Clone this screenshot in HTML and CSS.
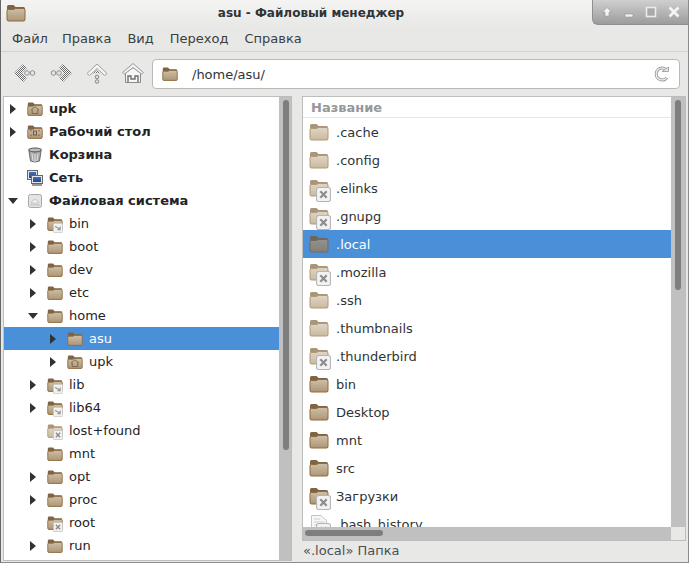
FILE: index.html
```html
<!DOCTYPE html>
<html lang="ru">

<head>
    <meta charset="UTF-8" />
    <title>asu - Файловый менеджер</title>
    <link rel="stylesheet" href="styles.css">
</head>

<body>
    <svg class="defs" width="0" height="0">
        <defs>
            <linearGradient id="bodyDark" x1="0" y1="0" x2="0" y2="1">
                <stop offset="0" stop-color="#cdbfa8" />
                <stop offset="1" stop-color="#ad9677" />
            </linearGradient>
            <linearGradient id="bodyLight" x1="0" y1="0" x2="0" y2="1">
                <stop offset="0" stop-color="#e0d6c6" />
                <stop offset="1" stop-color="#c9b9a0" />
            </linearGradient>
            <linearGradient id="screen" x1="0" y1="0" x2="0" y2="1">
                <stop offset="0" stop-color="#3f74b8" />
                <stop offset="1" stop-color="#1f4a8c" />
            </linearGradient>
            <pattern id="hatch" width="2" height="2" patternUnits="userSpaceOnUse">
                <rect width="2" height="2" fill="#f6f6f6" />
                <rect width="1" height="1" fill="#6f6f6f" />
                <rect x="1" y="1" width="1" height="1" fill="#6f6f6f" />
            </pattern>
            <symbol id="folder" viewBox="0 0 20 18">
                <path d="M1 16V2.500Q1 1 2.500 1H7.500L9.500 3H17.500Q19 3 19 4.500V16Q19 17 18 17H2Q1 17 1 16Z" fill="#7d6444" />
                <path d="M1 6.500Q1 5.500 2.500 5.500H7.500L9.500 4.500H17.500Q19 4.500 19 6V15.500Q19 17 17.500 17H2.500Q1 17 1 15.500Z" fill="url(#bodyDark)" stroke="#8f6a38" />
            </symbol>
            <symbol id="folderLight" viewBox="0 0 20 18">
                <path d="M1 16V2.500Q1 1 2.500 1H7.500L9.500 3H17.500Q19 3 19 4.500V16Q19 17 18 17H2Q1 17 1 16Z" fill="#a8957a" />
                <path d="M1 6.500Q1 5.500 2.500 5.500H7.500L9.500 4.500H17.500Q19 4.500 19 6V15.500Q19 17 17.500 17H2.500Q1 17 1 15.500Z" fill="url(#bodyLight)" stroke="#b09a78" />
            </symbol>
            <symbol id="badgeX" viewBox="0 0 14 14">
                <rect x="0.500" y="0.500" width="13" height="13" rx="2" fill="#f2f2f2" stroke="#b5b5b5" />
                <path d="M4 4L10 10M10 4L4 10" stroke="#8c8c8c" stroke-width="2" />
            </symbol>
            <symbol id="badgeLink" viewBox="0 0 14 14">
                <rect x="0.500" y="0.500" width="13" height="13" rx="2" fill="#f2f2f2" stroke="#c0c0c0" />
                <path d="M3 5L9 8M10 5V9.500H6" stroke="#8c8c8c" stroke-width="1.500" fill="none" />
            </symbol>
        </defs>
    </svg>

    <div class="window">
        <div class="titlebar">
            <svg class="app-icon"><use href="#folder" /></svg>
            <div class="title">asu - Файловый менеджер</div>
            <div class="wm-buttons">
                <svg width="12" height="12" viewBox="0 0 12 12"><path d="M6 1.500L10.500 6H8V10H4V6H1.500Z" fill="#f4f4f4" stroke="#8a8a8a" stroke-width="0.500" /></svg>
                <svg width="12" height="12" viewBox="0 0 12 12"><rect x="2" y="8" width="8" height="3" fill="#f0f0f0" stroke="#8a8a8a" stroke-width="0.500" /></svg>
                <svg width="12" height="12" viewBox="0 0 12 12"><rect x="1.500" y="1.500" width="9" height="9" fill="#a9a9a9" stroke="#ececec" stroke-width="1.600" /></svg>
                <svg width="14" height="14" viewBox="0 0 14 14"><path d="M2.500 2.500L11.500 11.500M11.500 2.500L2.500 11.500" stroke="#f4f4f4" stroke-width="2.600" /></svg>
            </div>
        </div>

        <div class="menubar">
            <span class="first">Файл</span>
            <span>Правка</span>
            <span>Вид</span>
            <span>Переход</span>
            <span>Справка</span>
        </div>

        <div class="toolbar">
            <div class="tool-buttons">
                <svg width="22" height="22" viewBox="0 0 22 22"><path d="M11 4L4 11L11 18" fill="none" stroke="#e4e4e4" stroke-width="7" /><path d="M11 4L4 11L11 18" fill="none" stroke="url(#hatch)" stroke-width="5.500" /><circle cx="13" cy="11" r="2.300" fill="#e6e6e6" stroke="#8f8f8f" /><circle cx="18.500" cy="11" r="2.300" fill="#e6e6e6" stroke="#8f8f8f" /></svg>
                <svg width="22" height="22" viewBox="0 0 22 22"><path d="M11 4L18 11L11 18" fill="none" stroke="#e4e4e4" stroke-width="7" /><path d="M11 4L18 11L11 18" fill="none" stroke="url(#hatch)" stroke-width="5.500" /><circle cx="9" cy="11" r="2.300" fill="#e6e6e6" stroke="#8f8f8f" /><circle cx="3.500" cy="11" r="2.300" fill="#e6e6e6" stroke="#8f8f8f" /></svg>
                <svg width="22" height="22" viewBox="0 0 22 22"><path d="M11 2L21 11.500L18.500 13.500L11 6.500L3.500 13.500L1 11.500Z" fill="#f4f4f4" stroke="#a0a0a0" /><path d="M11 8L15 11.500L11 11L7 11.500Z" fill="url(#hatch)" /><circle cx="11" cy="15" r="1.800" fill="#ddd" stroke="#8a8a8a" /><circle cx="11" cy="19.500" r="1.800" fill="#ddd" stroke="#8a8a8a" /></svg>
                <svg width="22" height="22" viewBox="0 0 22 22"><path d="M3.500 11V20.500H18.500V11L11 5.500Z" fill="#f6f6f6" stroke="#8a8a8a" /><path d="M11 1.500L21.500 10.500L19.500 12L11 5.500L2.500 12L0.500 10.500Z" fill="#f2f2f2" stroke="#9a9a9a" /><path d="M6 20V14H9V17H13V14H16V20" fill="none" stroke="#6f6f6f" stroke-width="1.400" /></svg>
            </div>
            <div class="address">
                <svg class="icon-small"><use href="#folder" /></svg>
                <span class="path">/home/asu/</span>
                <svg class="reload" width="16" height="16" viewBox="0 0 16 16"><path d="M13 4.500A6 6 0 1 0 13 11.500" fill="none" stroke="#9c9c9c" stroke-width="3" /><path d="M13 4.500A6 6 0 1 0 13 11.500" fill="none" stroke="#f2f2f2" stroke-width="1.200" /><path d="M8 5.500H14.500V1Z" fill="#e8e8e8" stroke="#969696" stroke-width="0.800" /></svg>
            </div>
        </div>

        <div class="panes">
            <div class="side-pane">
                <div class="tree">
                    <div class="tree-row top"><i class="arrow"></i>
                        <span class="icon-wrap"><svg class="icon-small"><use href="#folder" /></svg><svg class="overlay-home" viewBox="0 0 12 10"><path d="M1 5L6 1L11 5M2.500 4.500V9.500H9.500V4.500" fill="none" stroke="#6f5a3e" /></svg></span>
                        <span>upk</span>
                    </div>
                    <div class="tree-row top"><i class="arrow"></i>
                        <span class="icon-wrap"><svg class="icon-small"><use href="#folder" /></svg><svg class="overlay-home" viewBox="0 0 12 10"><rect x="4" y="2.500" width="4" height="5" fill="none" stroke="#5f4c34" /><path d="M1 1V3M11 1V3M1 7V9M11 7V9" stroke="#5f4c34" /></svg></span>
                        <span>Рабочий стол</span>
                    </div>
                    <div class="tree-row top"><i class="arrow none"></i>
                        <span class="icon-wrap"><svg class="icon-small" viewBox="0 0 16 16"><ellipse cx="8" cy="3" rx="6.500" ry="2" fill="#bdbdbd" stroke="#555" /><path d="M2 4L3.500 14Q8 16 12.500 14L14 4Q8 6.500 2 4Z" fill="#a9a9a9" stroke="#6b6b6b" /><path d="M5 6.500L6 14M8 7V15M11 6.500L10 14" stroke="#e2e2e2" /></svg></span>
                        <span>Корзина</span>
                    </div>
                    <div class="tree-row top"><i class="arrow none"></i>
                        <span class="icon-wrap"><svg class="icon-small" viewBox="0 0 16 16"><rect x="0.500" y="0.500" width="10" height="9" fill="#e6e6e6" stroke="#666" /><rect x="2" y="2" width="7" height="6" fill="url(#screen)" /><rect x="4.500" y="5.500" width="11" height="8" fill="#e6e6e6" stroke="#666" /><rect x="6" y="7" width="8" height="5" fill="url(#screen)" /><path d="M5 15H15" stroke="#777" stroke-width="1.500" /></svg></span>
                        <span>Сеть</span>
                    </div>
                    <div class="tree-row top"><i class="arrow open"></i>
                        <span class="icon-wrap"><svg class="icon-small" viewBox="0 0 16 16"><rect x="1.500" y="1.500" width="13" height="13" rx="2" fill="#e4e4e4" stroke="#a8a8a8" /><path d="M4 10Q8 3 12 10Z" fill="#f6f6f6" stroke="#c2c2c2" /><path d="M3 12H13" stroke="#bcbcbc" /></svg></span>
                        <span>Файловая система</span>
                    </div>
                    <div class="tree-row lvl1"><i class="arrow"></i>
                        <span class="icon-wrap"><svg class="icon-small"><use href="#folder" /></svg><svg class="badge-small"><use href="#badgeLink" /></svg></span>
                        <span>bin</span>
                    </div>
                    <div class="tree-row lvl1"><i class="arrow"></i>
                        <span class="icon-wrap"><svg class="icon-small"><use href="#folder" /></svg></span>
                        <span>boot</span>
                    </div>
                    <div class="tree-row lvl1"><i class="arrow"></i>
                        <span class="icon-wrap"><svg class="icon-small"><use href="#folder" /></svg></span>
                        <span>dev</span>
                    </div>
                    <div class="tree-row lvl1"><i class="arrow"></i>
                        <span class="icon-wrap"><svg class="icon-small"><use href="#folder" /></svg></span>
                        <span>etc</span>
                    </div>
                    <div class="tree-row lvl1"><i class="arrow open"></i>
                        <span class="icon-wrap"><svg class="icon-small"><use href="#folder" /></svg></span>
                        <span>home</span>
                    </div>
                    <div class="tree-row lvl2 selected"><i class="arrow"></i>
                        <span class="icon-wrap"><svg class="icon-small"><use href="#folder" /></svg></span>
                        <span>asu</span>
                    </div>
                    <div class="tree-row lvl2"><i class="arrow"></i>
                        <span class="icon-wrap"><svg class="icon-small"><use href="#folder" /></svg><svg class="overlay-home" viewBox="0 0 12 10"><path d="M1 5L6 1L11 5M2.500 4.500V9.500H9.500V4.500" fill="none" stroke="#6f5a3e" /></svg></span>
                        <span>upk</span>
                    </div>
                    <div class="tree-row lvl1"><i class="arrow"></i>
                        <span class="icon-wrap"><svg class="icon-small"><use href="#folder" /></svg><svg class="badge-small"><use href="#badgeLink" /></svg></span>
                        <span>lib</span>
                    </div>
                    <div class="tree-row lvl1"><i class="arrow"></i>
                        <span class="icon-wrap"><svg class="icon-small"><use href="#folder" /></svg><svg class="badge-small"><use href="#badgeLink" /></svg></span>
                        <span>lib64</span>
                    </div>
                    <div class="tree-row lvl1"><i class="arrow none"></i>
                        <span class="icon-wrap"><svg class="icon-small"><use href="#folderLight" /></svg><svg class="badge-small"><use href="#badgeX" /></svg></span>
                        <span>lost+found</span>
                    </div>
                    <div class="tree-row lvl1"><i class="arrow none"></i>
                        <span class="icon-wrap"><svg class="icon-small"><use href="#folder" /></svg></span>
                        <span>mnt</span>
                    </div>
                    <div class="tree-row lvl1"><i class="arrow"></i>
                        <span class="icon-wrap"><svg class="icon-small"><use href="#folder" /></svg></span>
                        <span>opt</span>
                    </div>
                    <div class="tree-row lvl1"><i class="arrow"></i>
                        <span class="icon-wrap"><svg class="icon-small"><use href="#folder" /></svg></span>
                        <span>proc</span>
                    </div>
                    <div class="tree-row lvl1"><i class="arrow none"></i>
                        <span class="icon-wrap"><svg class="icon-small"><use href="#folder" /></svg><svg class="badge-small"><use href="#badgeX" /></svg></span>
                        <span>root</span>
                    </div>
                    <div class="tree-row lvl1"><i class="arrow"></i>
                        <span class="icon-wrap"><svg class="icon-small"><use href="#folder" /></svg></span>
                        <span>run</span>
                    </div>
                </div>
                <div class="vscroll side"><div class="thumb"></div></div>
            </div>

            <div class="main-pane">
                <div class="list-area">
                    <div class="list">
                        <div class="list-header">Название</div>
                        <div class="list-row"><span class="icon-wrap big"><svg class="icon-big"><use href="#folderLight" /></svg></span>.cache</div>
                        <div class="list-row"><span class="icon-wrap big"><svg class="icon-big"><use href="#folderLight" /></svg></span>.config</div>
                        <div class="list-row"><span class="icon-wrap big"><svg class="icon-big"><use href="#folderLight" /></svg><svg class="badge-big"><use href="#badgeX" /></svg></span>.elinks</div>
                        <div class="list-row"><span class="icon-wrap big"><svg class="icon-big"><use href="#folderLight" /></svg><svg class="badge-big"><use href="#badgeX" /></svg></span>.gnupg</div>
                        <div class="list-row selected"><span class="icon-wrap big"><svg class="icon-big"><use href="#folderLight" /></svg></span>.local</div>
                        <div class="list-row"><span class="icon-wrap big"><svg class="icon-big"><use href="#folderLight" /></svg><svg class="badge-big"><use href="#badgeX" /></svg></span>.mozilla</div>
                        <div class="list-row"><span class="icon-wrap big"><svg class="icon-big"><use href="#folderLight" /></svg></span>.ssh</div>
                        <div class="list-row"><span class="icon-wrap big"><svg class="icon-big"><use href="#folderLight" /></svg></span>.thumbnails</div>
                        <div class="list-row"><span class="icon-wrap big"><svg class="icon-big"><use href="#folderLight" /></svg><svg class="badge-big"><use href="#badgeX" /></svg></span>.thunderbird</div>
                        <div class="list-row"><span class="icon-wrap big"><svg class="icon-big"><use href="#folder" /></svg></span>bin</div>
                        <div class="list-row"><span class="icon-wrap big"><svg class="icon-big"><use href="#folder" /></svg></span>Desktop</div>
                        <div class="list-row"><span class="icon-wrap big"><svg class="icon-big"><use href="#folder" /></svg></span>mnt</div>
                        <div class="list-row"><span class="icon-wrap big"><svg class="icon-big"><use href="#folder" /></svg></span>src</div>
                        <div class="list-row"><span class="icon-wrap big"><svg class="icon-big"><use href="#folder" /></svg><svg class="badge-big"><use href="#badgeX" /></svg></span>Загрузки</div>
                        <div class="list-row"><span class="icon-wrap big"><svg class="icon-big" viewBox="0 0 20 18"><path d="M2.500 0.500H12L17.500 5.500V18H2.500Z" fill="#f6f6f6" stroke="#c4c4c4" /><path d="M5 4H11M5 7H15M5 10H15M5 13H15" stroke="#d0d0d0" /></svg><svg class="badge-big"><use href="#badgeX" /></svg></span>.bash_history</div>
                    </div>
                    <div class="vscroll main"><div class="thumb"></div></div>
                </div>
                <div class="hscroll-row">
                    <div class="hscroll"><div class="hthumb"></div></div>
                    <div class="corner"></div>
                </div>
                <div class="status">«.local» Папка</div>
            </div>
        </div>
    </div>
</body>

</html>
```

FILE: styles.css
```css
html,
body {
    margin: 0;
    height: 100%;
    background: #fff;
    overflow: hidden;
}

body {
    font-family: "DejaVu Sans", sans-serif;
    font-size: 13px;
    color: #2e3436;
}

.defs {
    position: absolute;
}

.window {
    width: 689px;
    height: 563px;
    box-sizing: border-box;
    display: flex;
    flex-direction: column;
    background: #e8e8e7;
    border-left: 1px solid #666;
    border-right: 1px solid #8c8c8c;
    border-bottom: 1px solid #8c8c8c;
}

/* title bar */
.titlebar {
    height: 27px;
    flex: none;
    display: flex;
    align-items: flex-start;
    background: linear-gradient(#f4f4f3, #e8e8e7);
}

.app-icon {
    width: 20px;
    height: 18px;
    margin: 4px 0 0 5px;
    flex: none;
}

.title {
    flex: 1;
    text-align: center;
    font-size: 12px;
    font-weight: 700;
    line-height: 27px;
    padding-left: 4px;
    white-space: nowrap;
}

.wm-buttons {
    width: 96px;
    height: 25px;
    flex: none;
    box-sizing: border-box;
    padding-left: 8px;
    display: flex;
    align-items: center;
    gap: 10px;
    background: linear-gradient(#cfcfcf, #9c9c9c);
    border-bottom-left-radius: 6px;
    border-left: 1px solid #8f8f8f;
    border-bottom: 1px solid #8f8f8f;
}

/* menu */
.menubar {
    height: 23px;
    flex: none;
    display: flex;
    gap: 16px;
    align-items: center;
    padding: 0 0 1px 11px;
    border-bottom: 1px solid #d2d2d1;
    color: #3a3f41;
}

.menubar .first {
    margin-right: -2px;
}

/* toolbar */
.toolbar {
    height: 41px;
    flex: none;
    box-sizing: border-box;
    display: flex;
    align-items: center;
    padding: 3px 8px 0 13px;
}

.tool-buttons {
    width: 130px;
    margin: -2px 8px 0 0;
    display: flex;
    justify-content: space-between;
    flex: none;
}

.address {
    flex: 1;
    height: 30px;
    box-sizing: border-box;
    background: #fff;
    border: 1px solid #b9b9b9;
    border-radius: 4px;
    display: flex;
    align-items: center;
    padding: 0 9px;
    gap: 14px;
}

.path {
    flex: 1;
}

.reload {
    flex: none;
}

.icon-small {
    width: 16px;
    height: 16px;
    display: block;
    flex: none;
}

/* panes */
.panes {
    flex: 1;
    min-height: 0;
    display: flex;
    gap: 10px;
    padding: 3px 2px 1px 2px;
}

.side-pane {
    width: 289px;
    flex: none;
    display: flex;
    box-sizing: border-box;
    border: 1px solid #bdbdbc;
    min-height: 0;
}

.tree {
    flex: 1;
    background: #fff;
    overflow: hidden;
}

.tree-row {
    height: 23px;
    display: flex;
    align-items: center;
    color: #1f2325;
}

.tree-row.top {
    font-weight: 700;
}

.tree-row.lvl1 {
    padding-left: 20px;
}

.tree-row.lvl2 {
    padding-left: 40px;
}

.tree-row.selected {
    background: #4a90d9;
    color: #fff;
}

.arrow {
    width: 0;
    height: 0;
    margin: 0 11px 0 6px;
    border-style: solid;
    border-width: 5px 0 5px 6px;
    border-color: transparent transparent transparent #2e3436;
    flex: none;
}

.arrow.open {
    margin: 0 9px 0 4px;
    border-width: 6px 5px 0 5px;
    border-color: #2e3436 transparent transparent transparent;
}

.arrow.none {
    border-color: transparent;
}

.icon-wrap {
    position: relative;
    width: 16px;
    height: 16px;
    margin-right: 6px;
    flex: none;
}

.overlay-home {
    position: absolute;
    left: 3px;
    top: 5px;
    width: 10px;
    height: 8px;
}

.badge-small {
    position: absolute;
    left: 6px;
    top: 7px;
    width: 10px;
    height: 10px;
}

.vscroll {
    flex: none;
    background: #bfc0bf;
    box-sizing: border-box;
}

.vscroll.side {
    width: 12px;
    padding: 3px 2px 0 4px;
}

.vscroll.main {
    width: 14px;
    padding: 3px 4px 0;
}

.vscroll.side .thumb {
    height: 350px;
}

.vscroll.main .thumb {
    height: 190px;
}

.thumb {
    background: #7d7f7f;
    border-radius: 4px;
}

.main-pane {
    flex: 1;
    min-width: 0;
    display: flex;
    flex-direction: column;
    min-height: 0;
}

.list-area {
    flex: 1;
    min-height: 0;
    display: flex;
    border: 1px solid #bdbdbc;
    border-bottom: 0;
}

.list {
    flex: 1;
    background: #fff;
    overflow: hidden;
}

.list-header {
    height: 21px;
    line-height: 21px;
    box-sizing: border-box;
    padding-left: 8px;
    font-weight: 700;
    color: #95989a;
    border-bottom: 1px solid #e6e6e6;
}

.list-row {
    height: 28px;
    display: flex;
    align-items: center;
    padding-left: 6px;
}

.list-row.selected {
    background: #4a90d9;
    color: #fff;
}

.list-row.selected svg {
    filter: saturate(0.4) brightness(0.68);
}

.icon-wrap.big {
    width: 20px;
    height: 18px;
    margin-right: 7px;
}

.icon-big {
    width: 20px;
    height: 18px;
    display: block;
}

.badge-big {
    position: absolute;
    left: 7px;
    top: 8px;
    width: 15px;
    height: 15px;
}

.hscroll-row {
    height: 13px;
    flex: none;
    display: flex;
    border: 1px solid #bdbdbc;
    border-top: 0;
}

.hscroll {
    flex: 1;
    background: #bfc0bf;
    padding: 3px 2px;
}

.hthumb {
    width: 78px;
    height: 6px;
    background: #7d7f7f;
    border-radius: 3px;
}

.corner {
    width: 14px;
    background: #e8e8e7;
}

.status {
    height: 20px;
    flex: none;
    line-height: 20px;
    padding-left: 1px;
    color: #4b5052;
}
```
